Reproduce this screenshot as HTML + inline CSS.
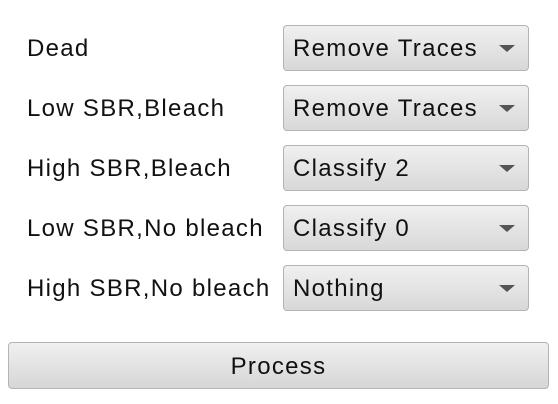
<html><head><style>
body{margin:0;width:558px;height:404px;background:#fff;font-family:"Liberation Sans",sans-serif;position:relative;overflow:hidden}
.l{position:absolute;left:27px;font-size:24px;letter-spacing:1.3px;color:#111;line-height:30px}
.c{position:absolute;left:283px;width:246px;height:46px;border:1px solid #b4b4b4;border-radius:4px;background:linear-gradient(#f0f0f0,#d8d8d8);box-sizing:border-box;font-size:24px;letter-spacing:1.3px;line-height:46px;padding-left:9px;color:#111}
.c:after{content:"";position:absolute;right:13px;top:19px;border-left:8px solid transparent;border-right:8px solid transparent;border-top:7px solid #555}
.b{position:absolute;left:8px;top:342px;width:541px;height:47px;border:1px solid #b4b4b4;border-radius:4px;background:linear-gradient(#f0f0f0,#d6d6d6);box-sizing:border-box;font-size:24px;letter-spacing:1.3px;line-height:48px;text-align:center;color:#111}
</style></head><body>
<div class="l" style="top:34px">Dead</div><div class="c" style="top:25px">Remove Traces</div>
<div class="l" style="top:94px">Low SBR,Bleach</div><div class="c" style="top:85px">Remove Traces</div>
<div class="l" style="top:154px">High SBR,Bleach</div><div class="c" style="top:145px">Classify 2</div>
<div class="l" style="top:214px">Low SBR,No bleach</div><div class="c" style="top:205px">Classify 0</div>
<div class="l" style="top:274px">High SBR,No bleach</div><div class="c" style="top:265px">Nothing</div>
<div class="b">Process</div>
</body></html>
